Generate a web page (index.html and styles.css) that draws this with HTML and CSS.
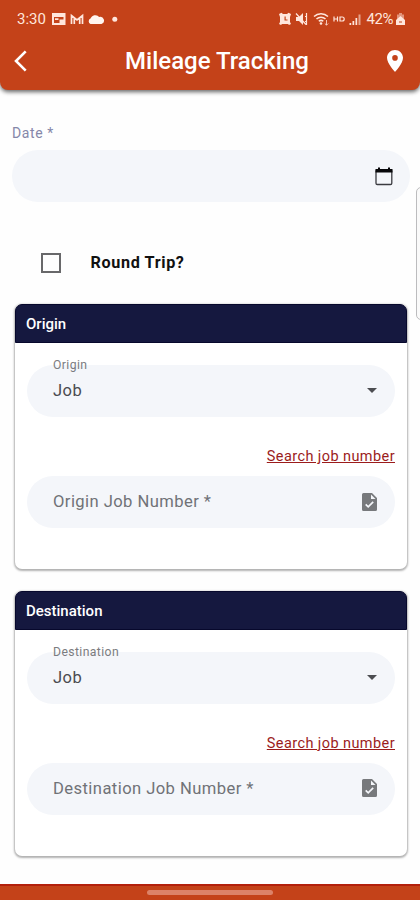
FILE: index.html
```html
<!DOCTYPE html>
<html lang="en">
<head>
<meta charset="utf-8">
<title>Mileage Tracking</title>
<link rel="stylesheet" href="styles.css">
</head>
<body>
<div class="screen">
  <header class="top">
    <div class="status">
      <span class="time">3:30</span>
      <svg class="s-left" width="68" height="14" viewBox="0 0 68 14" fill="#ffe6dc">
        <path fill-rule="evenodd" d="M0 1h13.500v12H0zM2 5v6h9.500V5z"/>
        <path d="M3 6.200h3.500V8H3zM7.500 7.500H12V12H7.500z"/>
        <path d="M19.500 12V3.500l5.500 4.500 5.500-4.500V12M22.300 12V6.500M27.700 12V6.500" fill="none" stroke="#ffe6dc" stroke-width="1.700"/>
        <path d="M38.500 12a3 3 0 0 1 0-5.500 5 5 0 0 1 8.500-1.500 3.500 3.500 0 0 1 2.500 7z" fill="#fff5f0"/>
        <circle cx="62.800" cy="7.300" r="2.500"/>
      </svg>
      <svg class="s-right" width="84" height="14" viewBox="0 0 84 14" fill="#ffe6dc">
        <path fill-rule="evenodd" d="M0 2l2.500-1.300L4 2h4l1.500-1.300L12 2l-1 3v5l1 2-2 1-1-1H3l-1 1-2-1 1-2V5zM5.500 4.500V8.500h3v-1H6.700v-3z"/>
        <path d="M17 5h3l4-4v12l-4-4h-3z"/>
        <path d="M17 1.500l10 11M26 4.500h2M26 9.500h2M27.500 1v12" fill="none" stroke="#ffe6dc" stroke-width="1.200"/>
        <path d="M35 4.500a10 10 0 0 1 14 0M37.500 7a6.500 6.500 0 0 1 9 0M39.800 9.300a3.500 3.500 0 0 1 4.500 0" fill="none" stroke="#ffe6dc" stroke-width="1.500"/>
        <circle cx="42" cy="11.500" r="1.300"/>
        <path d="M47.500 8v5M45.800 11.500l1.700 1.700 1.700-1.700" fill="none" stroke="#ffe6dc" stroke-width=".8"/>
        <path d="M55 4.500v5M58.500 4.500v5M55 7h3.500M61 5h2.200a2 2 0 0 1 0 4H61z" fill="none" stroke="#ffe6dc" stroke-width="1.200"/>
        <path d="M70.500 11h1.700v2h-1.700zM73.500 9h1.700v4h-1.700zM76.500 6h1.700v7h-1.700z"/>
        <path d="M79.500 2.500h2V13h-2z" opacity=".6"/>
      </svg>
      <span class="pct">42%</span>
      <svg class="s-bat" width="9" height="14" viewBox="0 0 9 14">
        <path d="M3 1h3v1.500h2V13H1V2.500h2z" fill="#ffe6dc" opacity=".5"/>
        <path d="M0 8l4.500-4L9 8v5H0z" fill="#ffe6dc"/><path d="M3 10h3" stroke="#c44219"/>
      </svg>
    </div>
    <div class="bar">
      <svg class="back" width="14" height="22" viewBox="0 0 14 22"><path d="M12.700 1.300L3 11l9.700 9.700" fill="none" stroke="#fff" stroke-width="2.600"/></svg>
      <h1>Mileage Tracking</h1>
      <svg class="pin" width="16" height="22" viewBox="0 0 16 22"><path fill="#fff" fill-rule="evenodd" d="M8 0C3.600 0 0 3.500 0 7.800 0 13.600 8 22 8 22s8-8.400 8-14.200C16 3.500 12.400 0 8 0zm0 5.100a2.800 2.800 0 1 1 0 5.600 2.800 2.800 0 0 1 0-5.600z"/></svg>
    </div>
  </header>

  <main class="content">
    <label class="date-label">Date *</label>
    <div class="pill date">
      <svg width="18" height="19" viewBox="0 0 18 19"><rect x="1" y="2.800" width="15.800" height="14.700" rx="1.300" fill="none" stroke="#3a3b40" stroke-width="1.300"/><path d="M.5 2H3V.5h2V2h8V.5h2V2h2.500v3.500H.5z" fill="#08080a"/></svg>
    </div>
    <div class="round"><span class="box"></span><span class="round-text">Round Trip?</span></div>

    <section class="card">
      <h2>Origin</h2>
      <div class="body">
        <div class="pill select"><span class="float">Origin</span><span class="value">Job</span><span class="caret"></span></div>
        <a class="search">Search job number</a>
        <div class="pill job"><span class="hint">Origin Job Number *</span>
          <svg width="15" height="18" viewBox="0 0 15 18"><path fill="#77797c" d="M2 0h8l5 5v11.500a1.500 1.500 0 0 1-1.500 1.500h-12A1.500 1.500 0 0 1 0 16.500v-15A1.500 1.500 0 0 1 1.500 0z"/><path d="M9 1.500V6h4.500z" fill="#f4f6fa"/><path d="M3.700 11.300l2.500 2.500 5-5" fill="none" stroke="#f4f6fa" stroke-width="1.700"/></svg>
        </div>
      </div>
    </section>

    <section class="card">
      <h2>Destination</h2>
      <div class="body">
        <div class="pill select"><span class="float">Destination</span><span class="value">Job</span><span class="caret"></span></div>
        <a class="search">Search job number</a>
        <div class="pill job"><span class="hint">Destination Job Number *</span>
          <svg width="15" height="18" viewBox="0 0 15 18"><path fill="#77797c" d="M2 0h8l5 5v11.500a1.500 1.500 0 0 1-1.500 1.500h-12A1.500 1.500 0 0 1 0 16.500v-15A1.500 1.500 0 0 1 1.500 0z"/><path d="M9 1.500V6h4.500z" fill="#f4f6fa"/><path d="M3.700 11.300l2.500 2.500 5-5" fill="none" stroke="#f4f6fa" stroke-width="1.700"/></svg>
        </div>
      </div>
    </section>
  </main>
  <footer class="nav"><span class="handle"></span></footer>
  <div class="edge"></div>
</div>
</body>
</html>
```
FILE: styles.css
```css
* { box-sizing: border-box; }
body { margin: 0; font-family: Roboto, "Liberation Sans", sans-serif; background: #fefefe; }
.screen { position: relative; width: 420px; height: 900px; overflow: hidden; display: flex; flex-direction: column; }
svg { display: block; flex: none; }
.top { height: 90px; flex: none; background: #c44219; border-radius: 0 0 8px 8px; box-shadow: 0 2px 4px rgba(0,0,0,.6); }
.status { display: flex; align-items: center; height: 38px; padding: 0 15.500px 0 17px; color: #ffe6dc; font-size: 15px; }
.time { width: 35px; line-height: 18px; }
.s-right { margin-left: auto; }
.pct { width: 29px; margin-left: 4px; line-height: 18px; font-size: 15px; letter-spacing: -.4px; }
.s-bat { margin-left: 0; }
.bar { display: flex; align-items: center; height: 45px; padding: 0 17px 0 13px; }
h1 { flex: 1; margin: 0; padding-left: 20px; text-align: center; color: #fff; font-size: 24px; font-weight: 500; line-height: 30px; }
.content { flex: 1; min-height: 0; padding: 34px 13px 0 15px; }
.date-label { display: block; margin-left: -3px; height: 18px; line-height: 18px; font-size: 14px; color: #8587a9; letter-spacing: .6px; }
.pill { height: 52px; border-radius: 26px; background: #f4f6fa; display: flex; align-items: center; justify-content: space-between; }
.date { margin: 8px 3px 0 -3px; width: 398px; padding-right: 17px; justify-content: flex-end; border-radius: 26px; }
.round { display: flex; align-items: center; height: 22px; margin: 49.500px 0 31px 26px; }
.box { width: 20px; height: 20px; border: 2px solid #68686a; }
.round-text { margin-left: 29.500px; font-size: 16.200px; font-weight: 700; color: #111; letter-spacing: .62px; }
.card { height: 265px; margin-top: -.5px; margin-bottom: 22px; border-radius: 7px; background: #fff; box-shadow: 0 1px 2px 1px rgba(0,0,0,.3); }
h2 { margin: 0; height: 39px; padding-left: 10px; border-radius: 7px 7px 0 0; background: #15183f; border: 1px solid #07082c; color: #fff; font-size: 15px; font-weight: 500; line-height: 38px; }
.body { padding: 22px 12px 0; }
.select { position: relative; padding: 0 18px 1px 26px; }
.float { position: absolute; left: 26px; top: -8px; line-height: 16px; font-size: 12.200px; color: #7b7c80; letter-spacing: .4px; }
.value { font-size: 16.500px; color: #4b4b4f; letter-spacing: .5px; }
.caret { border: 5px solid transparent; border-top-color: #4c4d51; border-bottom: 0; }
.search { display: block; height: 20px; margin: 30px 0 9px; text-align: right; font-size: 14.500px; line-height: 20px; color: #9b1c1c; text-decoration: underline; letter-spacing: .42px; }
.job { padding: 0 18px 1px 26px; }
.hint { font-size: 16.600px; color: #707277; letter-spacing: .42px; }
.nav { height: 16px; flex: none; background: #c44219; border-top: 2px solid #b3200c; display: flex; justify-content: center; }
.handle { width: 126px; height: 5px; margin-top: 4px; border-radius: 3px; background: #dc8268; }
.edge { position: absolute; left: 416px; top: 187px; width: 10px; height: 133px; border: 1px solid #bcbcbe; border-radius: 5px; background: #fafafa; }
```
